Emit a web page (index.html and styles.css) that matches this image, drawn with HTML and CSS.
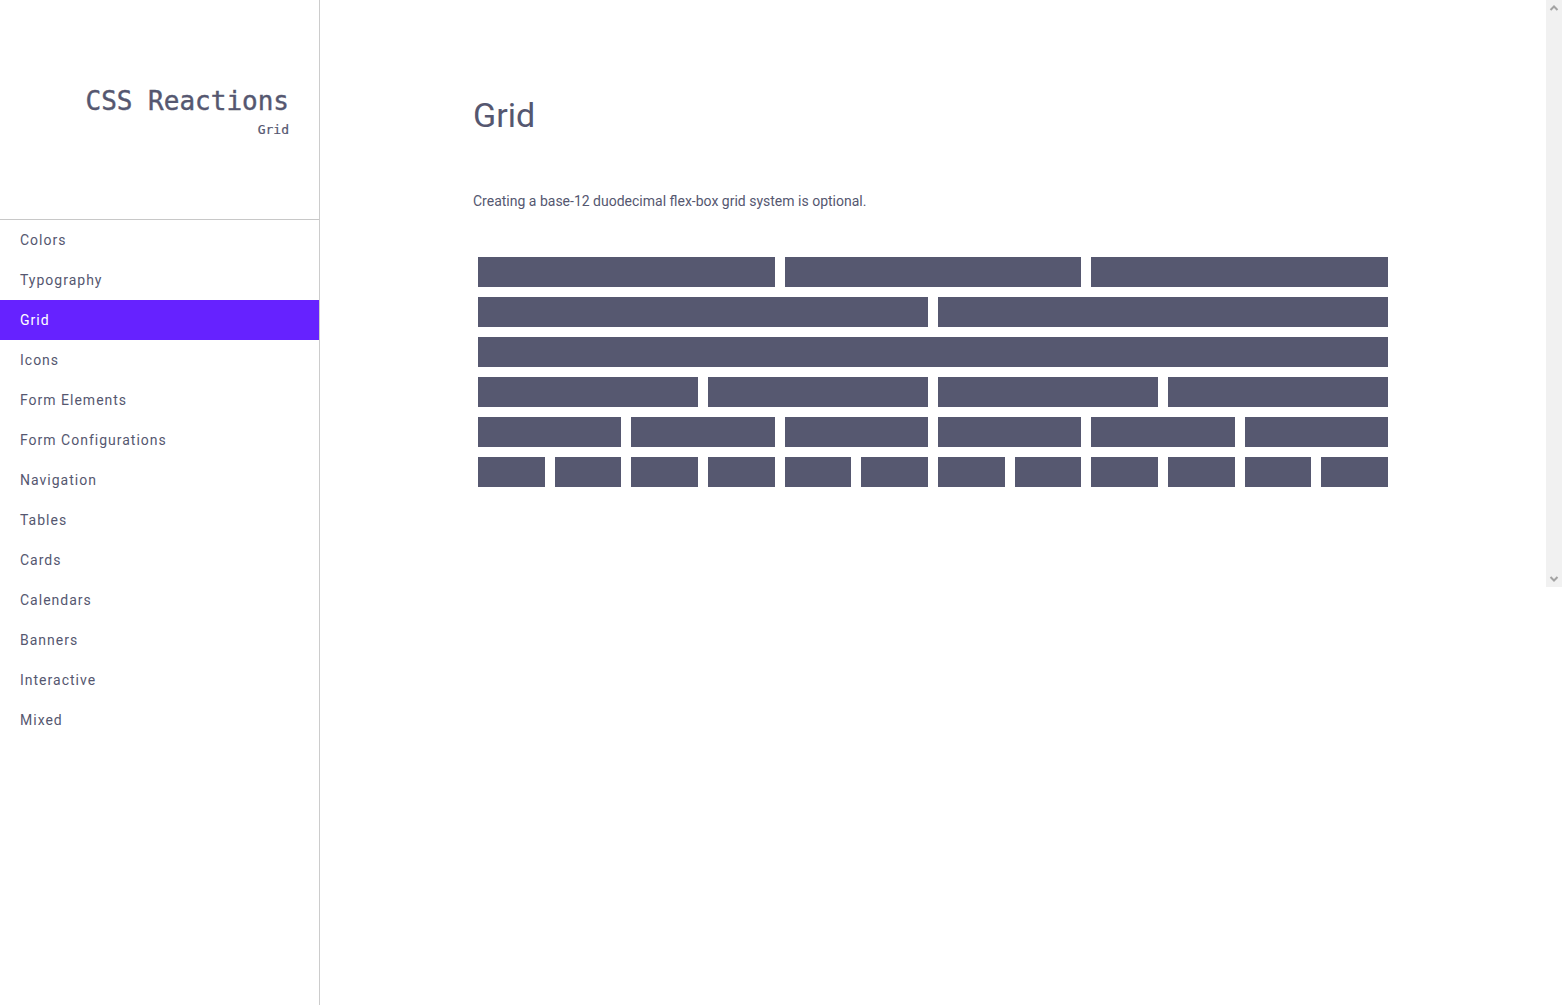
FILE: index.html
```html
<!DOCTYPE html>
<html lang="en">
<head>
<meta charset="utf-8">
<title>CSS Reactions - Grid</title>
<link rel="stylesheet" href="styles.css">
</head>
<body>
<div class="app">
  <aside class="sidebar">
    <header class="brand">
      <h1 class="brand-title">CSS Reactions</h1>
      <div class="brand-sub">Grid</div>
    </header>
    <nav class="nav">
      <a class="nav-item" href="#">Colors</a>
      <a class="nav-item" href="#">Typography</a>
      <a class="nav-item active" href="#">Grid</a>
      <a class="nav-item" href="#">Icons</a>
      <a class="nav-item" href="#">Form Elements</a>
      <a class="nav-item" href="#">Form Configurations</a>
      <a class="nav-item" href="#">Navigation</a>
      <a class="nav-item" href="#">Tables</a>
      <a class="nav-item" href="#">Cards</a>
      <a class="nav-item" href="#">Calendars</a>
      <a class="nav-item" href="#">Banners</a>
      <a class="nav-item" href="#">Interactive</a>
      <a class="nav-item" href="#">Mixed</a>
    </nav>
  </aside>
  <main class="main">
    <div class="container">
      <h2 class="page-title">Grid</h2>
      <p class="lead">Creating a base-12 duodecimal flex-box grid system is optional.</p>
      <div class="grid">
        <div class="row"><div class="col"></div><div class="col"></div><div class="col"></div></div>
        <div class="row"><div class="col"></div><div class="col"></div></div>
        <div class="row"><div class="col"></div></div>
        <div class="row"><div class="col"></div><div class="col"></div><div class="col"></div><div class="col"></div></div>
        <div class="row"><div class="col"></div><div class="col"></div><div class="col"></div><div class="col"></div><div class="col"></div><div class="col"></div></div>
        <div class="row"><div class="col"></div><div class="col"></div><div class="col"></div><div class="col"></div><div class="col"></div><div class="col"></div><div class="col"></div><div class="col"></div><div class="col"></div><div class="col"></div><div class="col"></div><div class="col"></div></div>
      </div>
    </div>
  </main>
  <div class="scrollbar" aria-hidden="true">
    <svg class="scroll-arrow" width="16" height="16" viewBox="0 0 16 16"><path d="M4.5 10 L8 6.5 L11.5 10" fill="none" stroke="#a3a3a3" stroke-width="2"/></svg>
    <svg class="scroll-arrow" width="16" height="16" viewBox="0 0 16 16"><path d="M4.5 6 L8 9.5 L11.5 6" fill="none" stroke="#a3a3a3" stroke-width="2"/></svg>
  </div>
</div>
</body>
</html>
```

FILE: styles.css
```css
* { box-sizing: border-box; }
html, body { margin: 0; padding: 0; }
body {
  font-family: Roboto, "Liberation Sans", sans-serif;
  color: #555770;
  background: #fff;
}
.app {
  display: flex;
  align-items: flex-start;
  height: 1005px;
  overflow: hidden;
}
.sidebar {
  width: 320px;
  flex: 0 0 320px;
  height: 1005px;
  border-right: 1px solid #cccccc;
}
.brand {
  height: 220px;
  border-bottom: 1px solid #c8c8c8;
  padding: 85px 30px 0 0;
  text-align: right;
}
.brand-title {
  margin: 0;
  font-family: "DejaVu Sans Mono", "Liberation Mono", monospace;
  font-weight: 400;
  font-size: 26px;
  line-height: 32px;
  color: #555770;
  -webkit-text-stroke: 0.4px #555770;
}
.brand-sub {
  font-family: "DejaVu Sans Mono", "Liberation Mono", monospace;
  font-size: 13px;
  line-height: 16px;
  margin-top: 5px;
  color: #555770;
  -webkit-text-stroke: 0.2px #555770;
}
.nav { display: flex; flex-direction: column; }
.nav-item {
  display: block;
  height: 40px;
  line-height: 40px;
  padding-left: 20px;
  font-size: 14px;
  letter-spacing: 1px;
  color: #555770;
  text-decoration: none;
}
.nav-item.active {
  background: #6622ff;
  color: #ffffff;
}
.main {
  flex: 1;
  height: 587px;
}
.container {
  width: 920px;
  margin: 0 auto;
  padding-top: 93px;
}
.page-title {
  margin: 0;
  font-size: 34px;
  font-weight: 400;
  line-height: 44px;
  color: #555770;
}
.lead {
  margin: 54px 0 0 0;
  font-size: 14px;
  line-height: 20px;
  color: #555770;
}
.grid { margin-top: 41px; }
.row { display: flex; }
.col {
  flex: 1 1 0;
  height: 30px;
  margin: 5px;
  background: #565870;
}
.scrollbar {
  flex: 0 0 16px;
  width: 16px;
  height: 587px;
  background: #f1f1f1;
  display: flex;
  flex-direction: column;
  justify-content: space-between;
}
.scroll-arrow { display: block; }
```
